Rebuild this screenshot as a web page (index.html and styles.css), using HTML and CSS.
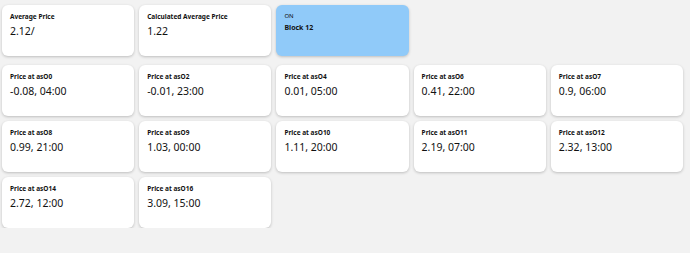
FILE: index.html
```html
<!DOCTYPE html>
<html lang="en">
<head>
    <meta charset="UTF-8">
    <meta name="viewport" content="width=device-width, initial-scale=1.0">
    <title>Prices</title>
    <link rel="stylesheet" href="styles.css">
</head>
<body>
    <div class="page">
        <div class="grid top-row">
            <div class="card">
                <div class="card-label">Average Price</div>
                <div class="card-value">2.12/</div>
            </div>
            <div class="card">
                <div class="card-label">Calculated Average Price</div>
                <div class="card-value">1.22</div>
            </div>
            <div class="card card-state">
                <div class="state-label">ON</div>
                <div class="state-value">Block 12</div>
            </div>
        </div>

        <div class="grid">
            <div class="card"><div class="card-label">Price at asO0</div><div class="card-value">-0.08, 04:00</div></div>
            <div class="card"><div class="card-label">Price at asO2</div><div class="card-value">-0.01, 23:00</div></div>
            <div class="card"><div class="card-label">Price at asO4</div><div class="card-value">0.01, 05:00</div></div>
            <div class="card"><div class="card-label">Price at asO6</div><div class="card-value">0.41, 22:00</div></div>
            <div class="card"><div class="card-label">Price at asO7</div><div class="card-value">0.9, 06:00</div></div>
            <div class="card"><div class="card-label">Price at asO8</div><div class="card-value">0.99, 21:00</div></div>
            <div class="card"><div class="card-label">Price at asO9</div><div class="card-value">1.03, 00:00</div></div>
            <div class="card"><div class="card-label">Price at asO10</div><div class="card-value">1.11, 20:00</div></div>
            <div class="card"><div class="card-label">Price at asO11</div><div class="card-value">2.19, 07:00</div></div>
            <div class="card"><div class="card-label">Price at asO12</div><div class="card-value">2.32, 13:00</div></div>
            <div class="card"><div class="card-label">Price at asO14</div><div class="card-value">2.72, 12:00</div></div>
            <div class="card"><div class="card-label">Price at asO16</div><div class="card-value">3.09, 15:00</div></div>
        </div>
    </div>
</body>
</html>
```

FILE: styles.css
```css
body {
    margin: 0;
    padding: 0;
    background: #f2f2f2;
    font-family: "Noto Sans", "Open Sans", sans-serif;
    color: #111;
}
.page {
    padding: 5px 7px 0 2px;
}
.grid {
    display: grid;
    grid-template-columns: repeat(5, 1fr);
    gap: 5px;
}
.top-row {
    margin-bottom: 9px;
}
.card {
    height: 51px;
    box-sizing: border-box;
    padding: 7px 8px;
    background: #fff;
    border-radius: 6px;
    box-shadow: 0 1px 3px rgba(0, 0, 0, 0.22);
}
.card-label {
    font-size: 6.5px;
    font-weight: bold;
    line-height: 9px;
}
.card-value {
    margin-top: 3px;
    font-size: 10.5px;
    line-height: 15px;
}
.card-state {
    background: #90caf9;
}
.state-label {
    font-size: 6px;
    line-height: 9px;
}
.state-value {
    margin-top: 2px;
    font-size: 7px;
    font-weight: bold;
    line-height: 10px;
}
```
